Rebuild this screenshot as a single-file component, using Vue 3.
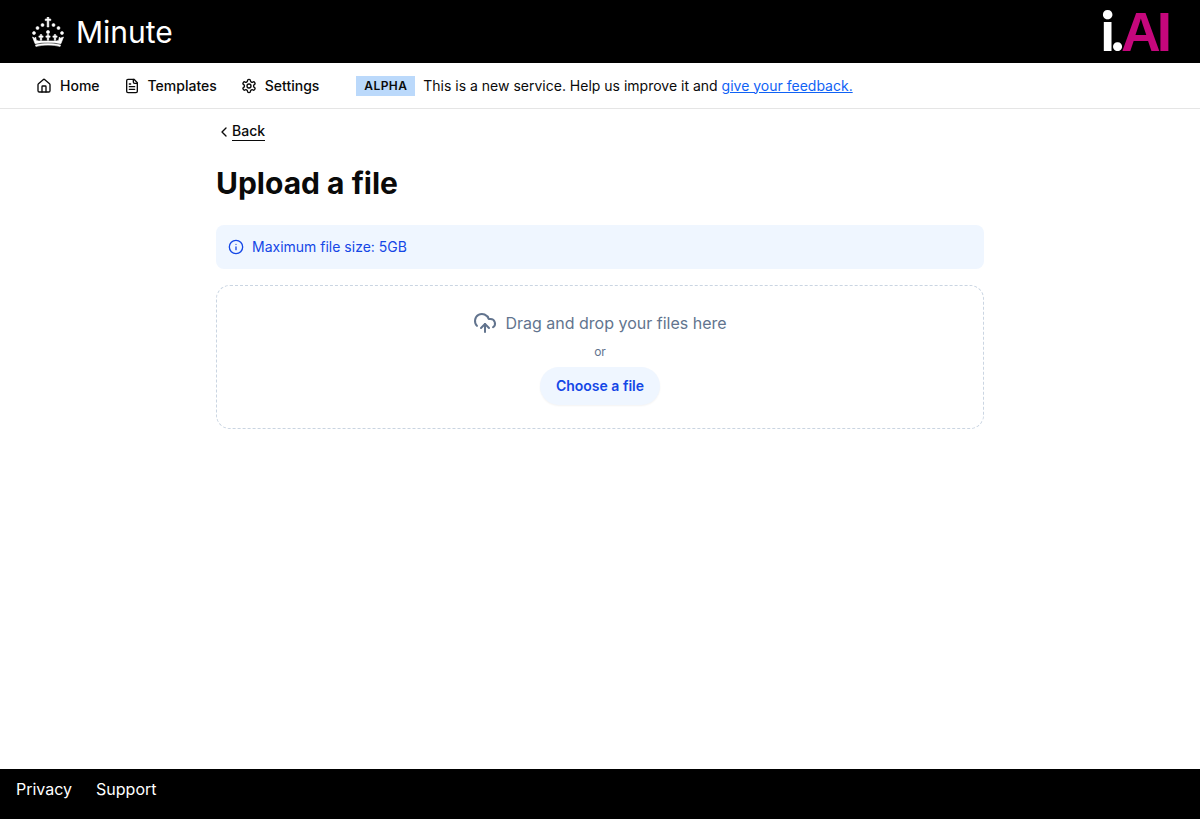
<template>
  <div class="page">
    <header class="top-bar">
      <a class="brand" href="#">
        <svg class="crown" viewBox="0 0 32 30" width="32" height="30" fill="#fff" stroke="#fff" stroke-width="0.6">
          <path d="M15.200 0h1.600v2h2v1.600h-2V10h-1.600V3.600h-2V2h2z" />
          <circle cx="10.500" cy="8" r="1.500" />
          <circle cx="21.500" cy="8" r="1.500" />
          <circle cx="5.500" cy="11" r="1.500" />
          <circle cx="26.500" cy="11" r="1.500" />
          <circle cx="2" cy="16" r="1.500" />
          <circle cx="30" cy="16" r="1.500" />
          <circle cx="16" cy="15" r="1.600" />
          <path d="M15.300 17.500h1.400v1.400h1.400v1.400h-1.400v3h-1.400v-3h-1.400v-1.400h1.400z" />
          <path d="M8.300 17.500h1.400v1.400h1.400v1.400H9.700v3H8.300v-3H6.900v-1.400h1.400z" />
          <path d="M22.300 17.500h1.400v1.400h1.400v1.400h-1.400v3h-1.400v-3h-1.400v-1.400h1.400z" />
          <path d="M.500 20l2.300 1.200.800-1.200.800 3.400 2.400.6h17.400l2.400-.6.800-3.400.800 1.200L31.500 20l-2.600 6.700C24.800 25.800 20.400 25.400 16 25.400s-8.800.4-12.900 1.300z" />
          <path d="M3.500 27.900c4-.9 8.200-1.300 12.500-1.300s8.500.4 12.500 1.300l-.4 1.500c-3.900-.9-7.900-1.300-12.100-1.300s-8.200.4-12.100 1.300z" />
        </svg>
        <span class="brand-name">Minute</span>
      </a>
      <div class="iai-logo" aria-label="i.AI"><span class="iai-white"><span class="iai-i">i</span><span class="iai-dot">.</span></span><span class="iai-pink">AI</span></div>
    </header>

    <nav class="nav-bar">
      <ul class="nav-links">
        <li v-for="link in navLinks" :key="link.label">
          <a href="#" class="nav-link">
            <svg viewBox="0 0 24 24" width="16" height="16" fill="none" stroke="currentColor" stroke-width="2" stroke-linecap="round" stroke-linejoin="round">
              <path v-for="d in link.paths" :key="d" :d="d" />
            </svg>
            {{ link.label }}
          </a>
        </li>
      </ul>
      <div class="phase-banner">
        <span class="phase-tag">ALPHA</span>
        <span>This is a new service. Help us improve it and <a href="#" class="feedback">give your feedback.</a></span>
      </div>
    </nav>

    <main class="content">
      <a href="#" class="back-link">
        <svg viewBox="0 0 24 24" width="16" height="16" fill="none" stroke="currentColor" stroke-width="2" stroke-linecap="round" stroke-linejoin="round">
          <path d="m15 18-6-6 6-6" />
        </svg>
        <span>Back</span>
      </a>
      <h1>Upload a file</h1>

      <div class="notice">
        <svg viewBox="0 0 24 24" width="16" height="16" fill="none" stroke="currentColor" stroke-width="2" stroke-linecap="round" stroke-linejoin="round">
          <circle cx="12" cy="12" r="10" />
          <path d="M12 16v-4" />
          <path d="M12 8h.01" />
        </svg>
        Maximum file size: 5GB
      </div>

      <div class="drop-zone">
        <div class="drop-title">
          <svg viewBox="0 0 24 24" width="24" height="24" fill="none" stroke="currentColor" stroke-width="2" stroke-linecap="round" stroke-linejoin="round">
            <path d="M12 13v8" />
            <path d="M4 14.899A7 7 0 1 1 15.710 8h1.790a4.500 4.500 0 0 1 2.500 8.242" />
            <path d="m8 17 4-4 4 4" />
          </svg>
          Drag and drop your files here
        </div>
        <div class="or">or</div>
        <button type="button" class="choose">Choose a file</button>
      </div>
    </main>

    <footer class="footer">
      <a href="#">Privacy</a>
      <a href="#">Support</a>
    </footer>
  </div>
</template>

<script setup>
const navLinks = [
  {
    label: 'Home',
    paths: [
      'M15 21v-8a1 1 0 0 0-1-1h-4a1 1 0 0 0-1 1v8',
      'M3 10a2 2 0 0 1 .709-1.528l7-5.999a2 2 0 0 1 2.582 0l7 5.999A2 2 0 0 1 21 10v9a2 2 0 0 1-2 2H5a2 2 0 0 1-2-2z'
    ]
  },
  {
    label: 'Templates',
    paths: [
      'M15 2H6a2 2 0 0 0-2 2v16a2 2 0 0 0 2 2h12a2 2 0 0 0 2-2V7Z',
      'M14 2v4a2 2 0 0 0 2 2h4',
      'M10 9H8',
      'M16 13H8',
      'M16 17H8'
    ]
  },
  {
    label: 'Settings',
    paths: [
      'M12.220 2h-.44a2 2 0 0 0-2 2v.18a2 2 0 0 1-1 1.730l-.43.25a2 2 0 0 1-2 0l-.15-.08a2 2 0 0 0-2.730.73l-.22.38a2 2 0 0 0 .73 2.730l.15.1a2 2 0 0 1 1 1.720v.51a2 2 0 0 1-1 1.740l-.15.09a2 2 0 0 0-.73 2.730l.22.38a2 2 0 0 0 2.730.73l.15-.08a2 2 0 0 1 2 0l.43.25a2 2 0 0 1 1 1.730V20a2 2 0 0 0 2 2h.44a2 2 0 0 0 2-2v-.18a2 2 0 0 1 1-1.730l.43-.25a2 2 0 0 1 2 0l.15.08a2 2 0 0 0 2.730-.73l.22-.39a2 2 0 0 0-.73-2.730l-.15-.08a2 2 0 0 1-1-1.740v-.5a2 2 0 0 1 1-1.740l.15-.09a2 2 0 0 0 .73-2.730l-.22-.38a2 2 0 0 0-2.730-.73l-.15.08a2 2 0 0 1-2 0l-.43-.25a2 2 0 0 1-1-1.730V4a2 2 0 0 0-2-2z',
      'M15 12a3 3 0 1 1-6 0 3 3 0 0 1 6 0z'
    ]
  }
]
</script>

<style>
body {
  margin: 0;
  background: #fff;
}
</style>

<style scoped>
.page {
  min-height: 819px;
  display: flex;
  flex-direction: column;
  font-family: Inter, "Liberation Sans", sans-serif;
  font-size: 14px;
  line-height: 20px;
  color: #0a0a0a;
}

a {
  color: inherit;
  text-decoration: none;
}

.top-bar {
  height: 63px;
  background: #000;
  display: flex;
  align-items: center;
  justify-content: space-between;
  padding: 0 32px;
}

.brand {
  display: flex;
  align-items: center;
  gap: 12px;
  color: #fff;
}

.crown {
  display: block;
}

.brand-name {
  font-size: 30px;
  line-height: 36px;
  font-weight: 400;
}

.iai-logo {
  font-weight: 700;
  font-size: 55px;
  line-height: 63px;
  white-space: nowrap;
}

.iai-white {
  font-family: Lato, sans-serif;
  font-weight: 900;
  color: #fff;
}

.iai-i {
  letter-spacing: -4px;
}

.iai-dot {
  letter-spacing: -3px;
}

.iai-pink {
  font-family: "Liberation Sans", sans-serif;
  color: #c5077c;
  letter-spacing: -4px;
}

.nav-bar {
  height: 45px;
  border-bottom: 1px solid #e5e5e5;
  display: flex;
  align-items: center;
  padding: 0 36px;
  gap: 37px;
}

.nav-links {
  list-style: none;
  margin: 0;
  padding: 0;
  display: flex;
  gap: 24px;
}

.nav-link {
  display: flex;
  align-items: center;
  gap: 8px;
  font-weight: 500;
}

.phase-banner {
  display: flex;
  align-items: center;
  gap: 8px;
}

.phase-tag {
  background: #bbd9fb;
  padding: 0 8px;
  font-size: 12px;
  font-weight: 600;
  letter-spacing: 0.4px;
}

.feedback {
  color: #0f62f5;
  text-decoration: underline;
}

.content {
  flex: 1;
  width: 768px;
  margin: 0 auto;
}

.back-link {
  display: inline-flex;
  align-items: center;
  margin-top: 13px;
  font-weight: 500;
}

.back-link span {
  line-height: 18px;
  border-bottom: 1px solid #0a0a0a;
}

h1 {
  margin: 20px 0 0;
  font-size: 30px;
  line-height: 36px;
  font-weight: 700;
}

.notice {
  margin-top: 24px;
  height: 44px;
  box-sizing: border-box;
  padding: 0 12px;
  border-radius: 8px;
  background: #eff6ff;
  color: #1447e6;
  display: flex;
  align-items: center;
  gap: 8px;
  font-weight: 400;
}

.drop-zone {
  margin-top: 16px;
  height: 144px;
  box-sizing: border-box;
  border: 1px dashed #cad5e2;
  border-radius: 14px;
  display: flex;
  flex-direction: column;
  align-items: center;
  padding-top: 25px;
}

.drop-title {
  display: flex;
  align-items: center;
  gap: 8px;
  color: #62748e;
  font-size: 16px;
  line-height: 24px;
  font-weight: 400;
}

.or {
  margin-top: 9px;
  color: #62748e;
  font-size: 12px;
  line-height: 16px;
}

.choose {
  margin-top: 7px;
  height: 38px;
  padding: 0 16px;
  border: 0;
  border-radius: 19px;
  background: #eff6ff;
  color: #1447e6;
  font-family: inherit;
  font-size: 14px;
  font-weight: 600;
  box-shadow: 0 1px 2px rgba(0, 0, 0, 0.05);
}

.footer {
  height: 50px;
  box-sizing: border-box;
  background: #000;
  color: #fff;
  display: flex;
  align-items: flex-start;
  gap: 24px;
  padding: 8px 16px 0;
  font-size: 16px;
  line-height: 24px;
  font-weight: 400;
}
</style>
